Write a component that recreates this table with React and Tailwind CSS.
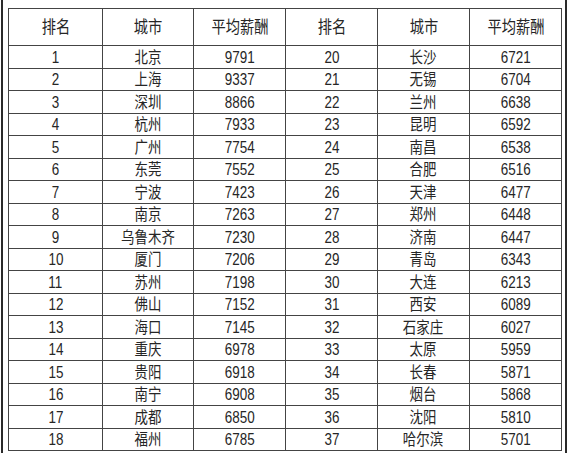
import React from "react";

const left = [
  [1, "北京", 9791],
  [2, "上海", 9337],
  [3, "深圳", 8866],
  [4, "杭州", 7933],
  [5, "广州", 7754],
  [6, "东莞", 7552],
  [7, "宁波", 7423],
  [8, "南京", 7263],
  [9, "乌鲁木齐", 7230],
  [10, "厦门", 7206],
  [11, "苏州", 7198],
  [12, "佛山", 7152],
  [13, "海口", 7145],
  [14, "重庆", 6978],
  [15, "贵阳", 6918],
  [16, "南宁", 6908],
  [17, "成都", 6850],
  [18, "福州", 6785],
];

const right = [
  [20, "长沙", 6721],
  [21, "无锡", 6704],
  [22, "兰州", 6638],
  [23, "昆明", 6592],
  [24, "南昌", 6538],
  [25, "合肥", 6516],
  [26, "天津", 6477],
  [27, "郑州", 6448],
  [28, "济南", 6447],
  [29, "青岛", 6343],
  [30, "大连", 6213],
  [31, "西安", 6089],
  [32, "石家庄", 6027],
  [33, "太原", 5959],
  [34, "长春", 5871],
  [35, "烟台", 5868],
  [36, "沈阳", 5810],
  [37, "哈尔滨", 5701],
];

const headers = ["排名", "城市", "平均薪酬", "排名", "城市", "平均薪酬"];

function Cell({ children, head }) {
  return (
    <div className={"flex min-h-0 items-center justify-center overflow-hidden bg-white " + (head ? "pt-[1px]" : "pt-[2px]")}>
      <span className={"inline-block scale-x-[0.84] whitespace-nowrap leading-none " + (head ? "text-[17px]" : "text-[16px]")}>
        {children}
      </span>
    </div>
  );
}

export default function App() {
  const rows = left.map((row, i) => [...row, ...right[i]]);
  return (
    <div
      className="w-[568px] h-[453px] overflow-hidden bg-white px-[1px] text-[#262626]"
      style={{ fontFamily: '"Liberation Sans", "Noto Sans CJK SC", sans-serif' }}
    >
      <div className="h-full border-x-2 border-[#2a2a2a] pt-[8px] pl-[5px] pr-[3px]">
        <div className="grid h-[443px] grid-cols-[93px_90px_91px_91px_91px_91px] grid-rows-[36px_repeat(18,minmax(0,1fr))] gap-px border border-[#444] bg-[#444]">
          {headers.map((h, i) => (
            <Cell key={"h" + i} head>
              {h}
            </Cell>
          ))}
          {rows.map((row, r) =>
            row.map((v, c) => <Cell key={r + "-" + c}>{v}</Cell>)
          )}
        </div>
      </div>
    </div>
  );
}
